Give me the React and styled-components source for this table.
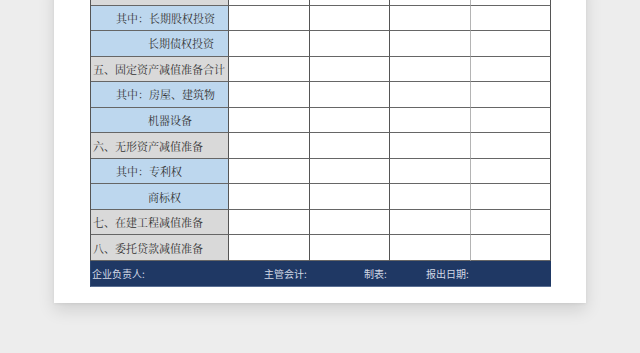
import React from 'react'
import styled, { createGlobalStyle } from 'styled-components'

const GlobalStyle = createGlobalStyle`
  html, body {
    margin: 0;
    padding: 0;
    background: #ededed;
    overflow: hidden;
  }
`

const Page = styled.div`
  width: 640px;
  height: 353px;
  overflow: hidden;
`

const Paper = styled.div`
  box-sizing: border-box;
  width: 532px;
  margin-left: 54px;
  margin-top: -20px;
  padding: 0 35px 16px 36px;
  background: #ffffff;
  box-shadow: 0 7px 16px rgba(0, 0, 0, 0.12), 0 1px 3px rgba(0, 0, 0, 0.06);
`

const Sheet = styled.div`
  display: grid;
  grid-template-columns: 138px 81px 80px 81px 80px;
  grid-auto-rows: 25.55px;
  border-left: 1px solid #555;
`

const Label = styled.div`
  box-sizing: border-box;
  display: flex;
  align-items: center;
  padding-left: ${props => props.indent}px;
  background: ${props => props.section ? '#d9d9d9' : '#bdd7ee'};
  border-right: 1px solid #555;
  border-bottom: 1px solid #666;
  color: #333333;
  font-family: "Noto Serif CJK SC", "Noto Sans CJK SC", serif;
  font-size: 11px;
  white-space: nowrap;
  overflow: hidden;
`

const Cell = styled.div`
  box-sizing: border-box;
  background: #ffffff;
  border-right: 1px solid ${props => props.light ? '#b4b4b4' : '#555'};
  border-bottom: 1px solid #666;
`

const Footer = styled.div`
  box-sizing: border-box;
  display: grid;
  grid-template-columns: 172px 100px 62px 1fr;
  align-items: center;
  height: 25.5px;
  padding-left: 1px;
  background: #1f3864;
  border-left: 1px solid #2c4670;
  border-bottom: 1px solid #5a6f93;
  color: #d3d9e6;
  font-family: "Noto Sans CJK SC", "Liberation Sans", sans-serif;
  font-size: 10px;
`

// the first row only shows its bottom edge; its caption lies above the view
const rows = [
  { text: '', section: true, indent: 2 },
  { text: '其中：长期股权投资', indent: 25 },
  { text: '长期债权投资', indent: 57 },
  { text: '五、固定资产减值准备合计', section: true, indent: 2 },
  { text: '其中：房屋、建筑物', indent: 25 },
  { text: '机器设备', indent: 57 },
  { text: '六、无形资产减值准备', section: true, indent: 2 },
  { text: '其中：专利权', indent: 25 },
  { text: '商标权', indent: 57 },
  { text: '七、在建工程减值准备', section: true, indent: 2 },
  { text: '八、委托贷款减值准备', section: true, indent: 2 },
]

export default function App() {
  return (
    <Page>
      <GlobalStyle />
      <Paper>
        <Sheet>
          {rows.map((row, i) => (
            <React.Fragment key={i}>
              <Label section={row.section} indent={row.indent}>{row.text}</Label>
              <Cell />
              <Cell />
              <Cell light />
              <Cell />
            </React.Fragment>
          ))}
        </Sheet>
        <Footer>
          <span>企业负责人:</span>
          <span>主管会计:</span>
          <span>制表:</span>
          <span>报出日期:</span>
        </Footer>
      </Paper>
    </Page>
  )
}
